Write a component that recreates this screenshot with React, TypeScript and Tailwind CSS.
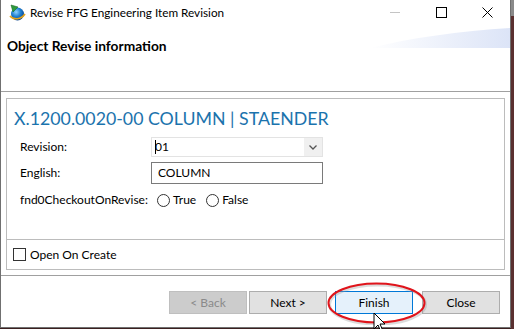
import React from "react";

function AppIcon() {
  return (
    <svg width="18" height="18" viewBox="0 0 18 18">
      <defs>
        <radialGradient id="globe" cx="0.4" cy="0.35" r="0.7">
          <stop offset="0" stopColor="#8fd3ff" />
          <stop offset="0.5" stopColor="#1e7fd0" />
          <stop offset="1" stopColor="#0b3f86" />
        </radialGradient>
      </defs>
      <circle cx="9.5" cy="10" r="6.5" fill="url(#globe)" />
      <path d="M2 12 C5 16 13 16 17 10" stroke="#e3a21a" strokeWidth="1.6" fill="none" />
      <path d="M3 1 L10 3 L5 8 Z" fill="#2e9b3c" stroke="#1b6b25" strokeWidth="0.6" />
    </svg>
  );
}

function Radio({ label }: { label: string }) {
  return (
    <div className="flex items-center">
      <span className="w-[13px] h-[13px] rounded-full border border-[#333] bg-white" />
      <span className="ml-[3px]">{label}</span>
    </div>
  );
}

export default function App() {
  return (
    <div className="w-[514px] h-[329px] flex bg-[#3b1f1f] overflow-hidden font-['Lato','Segoe_UI',sans-serif] text-[12px] text-black">
      <div className="relative w-[511px] h-[328px] bg-white border-l border-r border-b border-[#707070] flex flex-col shrink-0">
        {/* title bar */}
        <div className="h-[28px] flex items-center shrink-0">
          <div className="ml-[7px] mt-[-2px]">
            <AppIcon />
          </div>
          <span className="ml-[4px] mt-[-3px] text-[11.75px] leading-none">Revise FFG Engineering Item Revision</span>
          <div className="ml-auto flex items-center h-full">
            <div className="w-[46px] h-full flex items-center justify-center">
              <span className="w-[10px] h-px bg-[#c4c4c4] mt-[-4px]" />
            </div>
            <div className="w-[46px] h-full flex items-center justify-center">
              <span className="w-[11px] h-[11px] border border-black mt-[-4px]" />
            </div>
            <div className="w-[46px] h-full flex items-center justify-center">
              <svg width="11" height="11" viewBox="0 0 11 11" className="mt-[-4px]">
                <path d="M0.5 0.5 L10.5 10.5 M10.5 0.5 L0.5 10.5" stroke="#000" strokeWidth="1" />
              </svg>
            </div>
          </div>
        </div>

        {/* header */}
        <div className="relative h-[63px] shrink-0">
          <svg className="absolute right-0 top-0" width="140" height="21" viewBox="0 0 140 21">
            <defs>
              <linearGradient id="wave" x1="0" y1="0" x2="1" y2="0">
                <stop offset="0" stopColor="#ffffff" />
                <stop offset="1" stopColor="#dce4f7" />
              </linearGradient>
            </defs>
            <path d="M0 20 C40 10 90 3 140 0 L140 20 Z" fill="url(#wave)" />
          </svg>
          <div className="pl-[6px] pt-[8px] font-bold text-[13.75px]">Object Revise information</div>
        </div>
        <div className="h-px bg-[#a0a0a0] shrink-0" />

        {/* body */}
        <div className="h-[183px] px-[5px] pt-[6px] shrink-0">
          <div className="border border-[#bcbcbc] flex flex-col">
            <div className="h-[140px] pl-[7px] pr-[6px]">
              <div className="text-[17.75px] leading-[24px] text-[#1b73ad] mt-[7px]">X.1200.0020-00 COLUMN | STAENDER</div>
              <div className="pl-[6px] mt-[7px] flex flex-col">
                <div className="flex items-center h-[20px]">
                  <span className="w-[131px]">Revision:</span>
                  <div className="w-[172px] h-[20px] border border-[#e3e3e3] flex items-center">
                    <span className="ml-[3px] w-px h-[14px] bg-black" />
                    <span className="ml-[-1px]">01</span>
                    <div className="ml-auto w-[18px] h-full bg-[#f0f0f0] flex items-center justify-center">
                      <svg width="8" height="5" viewBox="0 0 8 5">
                        <path d="M0.5 0.5 L4 4 L7.5 0.5" stroke="#555" strokeWidth="1.3" fill="none" />
                      </svg>
                    </div>
                  </div>
                </div>
                <div className="flex items-center h-[22px] mt-[5px]">
                  <span className="w-[131px]">English:</span>
                  <div className="w-[172px] h-[22px] border border-[#7a7a7a] flex items-center pl-[6px]">COLUMN</div>
                </div>
                <div className="flex items-center h-[20px] mt-[6px]">
                  <span className="w-[137px]">fnd0CheckoutOnRevise:</span>
                  <div className="flex items-center gap-[10px]">
                    <Radio label="True" />
                    <Radio label="False" />
                  </div>
                </div>
              </div>
            </div>
            <div className="h-[30px] border-t border-[#bcbcbc] flex items-center pl-[6px]">
              <span className="w-[13px] h-[13px] border border-[#333] bg-white" />
              <span className="ml-[4px]">Open On Create</span>
            </div>
          </div>
        </div>
        <div className="h-px bg-[#a0a0a0] shrink-0" />

        {/* buttons */}
        <div className="flex-1 flex items-start justify-end pt-[15px] pr-[10px]">
          <button className="w-[78px] h-[23px] border border-[#bfbfbf] bg-[#cccccc] text-[#8a8a8a]">&lt; Back</button>
          <button className="ml-[2px] w-[78px] h-[23px] border border-[#adadad] bg-[#e1e1e1]">Next &gt;</button>
          <button className="ml-[8px] w-[78px] h-[23px] border border-[#0078d7] bg-[#e5f1fb]">Finish</button>
          <button className="ml-[9px] w-[78px] h-[23px] border border-[#adadad] bg-[#e1e1e1]">Close</button>
        </div>

        {/* annotation ellipse */}
        <svg className="absolute left-[325px] top-[281px]" width="101" height="44" viewBox="0 0 101 44">
          <ellipse cx="50.5" cy="22" rx="48" ry="19.5" fill="none" stroke="#9a9a9a" strokeOpacity="0.35" strokeWidth="3" transform="translate(1 1.5)" />
          <ellipse cx="50.5" cy="22" rx="48" ry="19.5" fill="none" stroke="#e0141b" strokeWidth="2" />
        </svg>

        {/* mouse cursor */}
        <svg className="absolute left-[372px] top-[312px]" width="14" height="22" viewBox="0 0 14 22">
          <path d="M1 1 L1 17 L5 13 L8 20 L10 19 L7 12 L12 12 Z" fill="#fff" stroke="#000" strokeWidth="1" />
        </svg>
      </div>
      <div className="flex-1 flex flex-col">
        <div className="h-[16px] bg-[#8a8a8a]" />
        <div className="flex-1 bg-[#5a3030]" />
      </div>
    </div>
  );
}
